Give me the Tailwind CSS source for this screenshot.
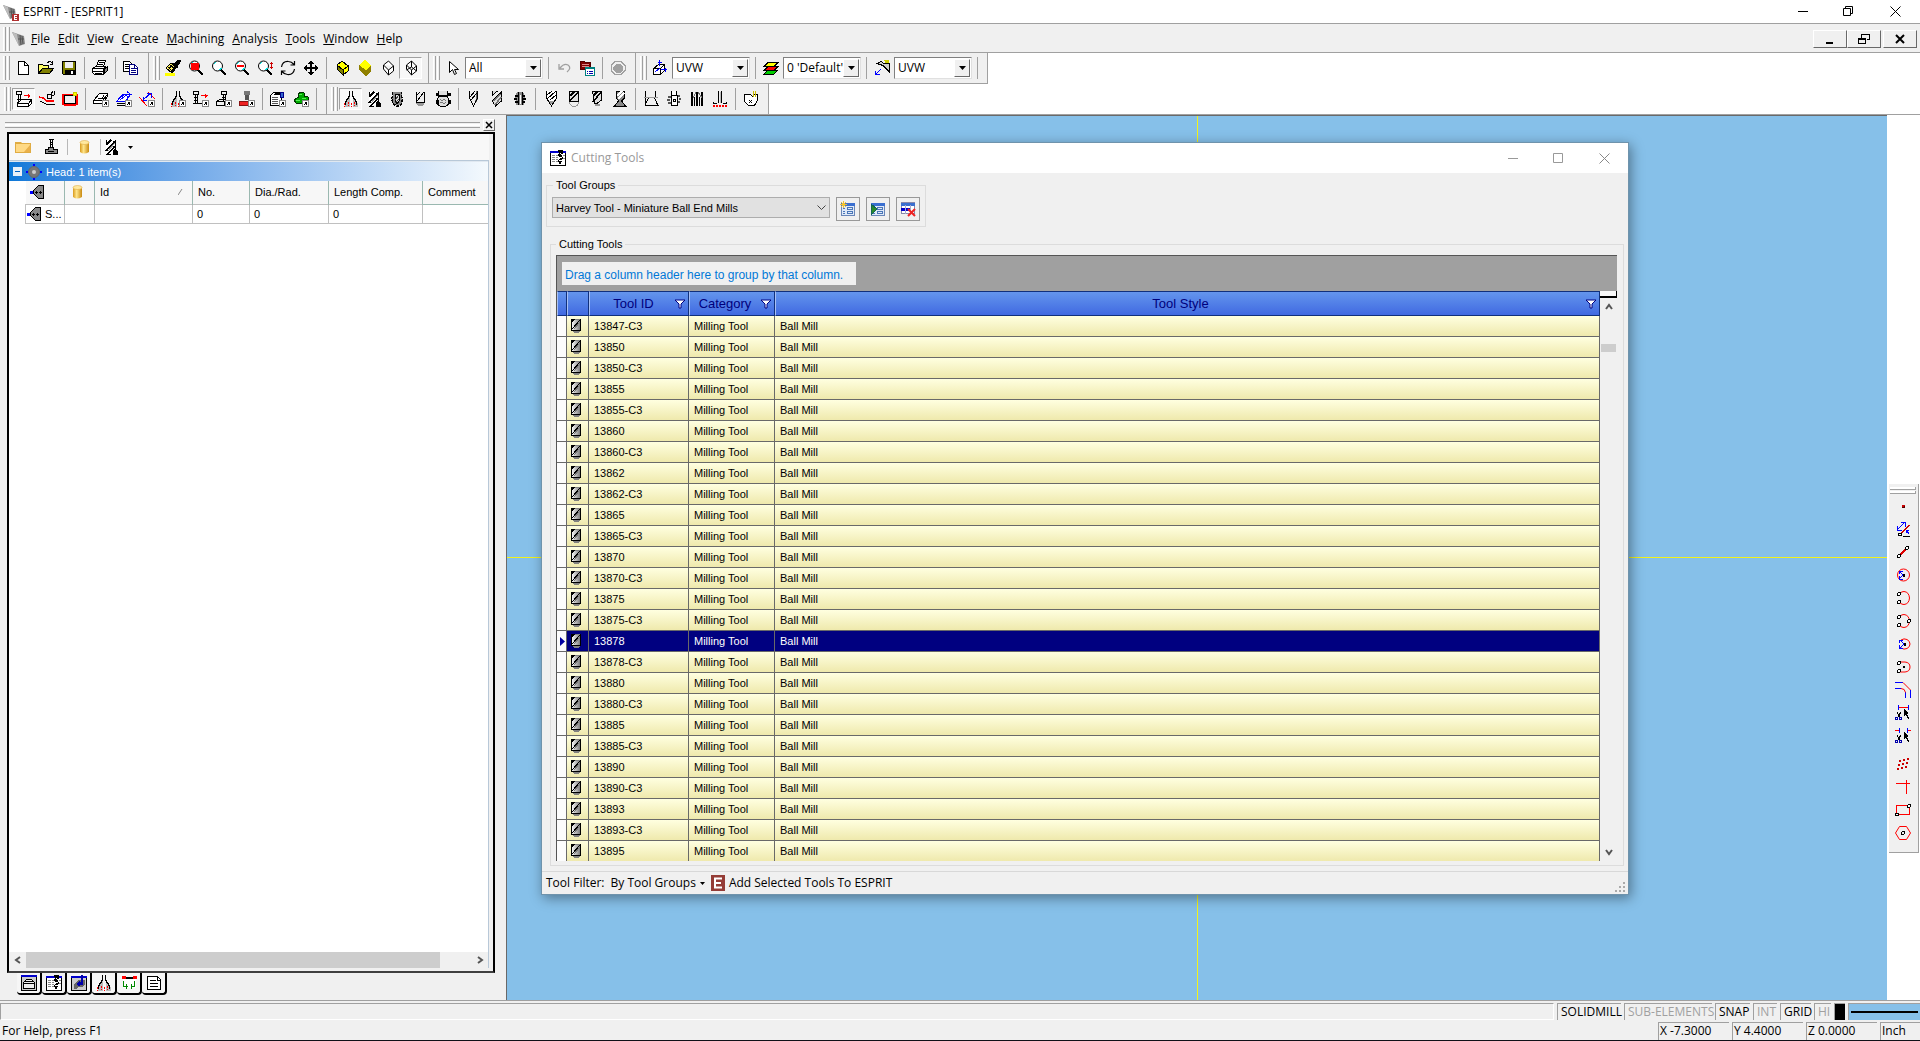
<!DOCTYPE html>
<html lang="en">
<head>
  <meta charset="UTF-8" />
  <meta name="viewport" content="width=device-width, initial-scale=1.0" />
  <title>ESPRIT - [ESPRIT1]</title>
  <script src="https://cdn.jsdelivr.net/npm/@tailwindcss/browser@4"></script>
</head>
<body class="h-screen overflow-hidden flex flex-col bg-[#f0f0f0] text-black text-[12px] leading-4 font-['Open_Sans',sans-serif]">

<!-- icon sprites -->
<svg class="absolute w-0 h-0" xmlns="http://www.w3.org/2000/svg">
  <defs>
    <linearGradient id="steel"><stop offset="0" stop-color="#fff"/><stop offset="1" stop-color="#777"/></linearGradient>
    <linearGradient id="gold"><stop offset="0" stop-color="#d99a1c"/><stop offset=".4" stop-color="#ffe58a"/><stop offset="1" stop-color="#c98a10"/></linearGradient>
    <g id="lens"><circle cx="6.500" cy="6" r="5" fill="#fff" shape-rendering="auto"/><path d="M3 4l2-2M8 10l3-2" stroke="#0dd"/><path d="M10 10l5 5" stroke-width="2.500"/></g>
    <g id="jump"><path d="M9.500 9.500h6v6h-6z" fill="#fff" stroke="#888"/><path d="M11 14l3-3M11.500 11.500h2v2"/></g>
    <g id="nodes"><circle cx="4" cy="4" r="1.500" fill="#fff"/><circle cx="4" cy="12" r="1.500" fill="#fff"/></g>
    <g id="snip"><path d="M2 7l3 5M6 7l-3 5"/><path d="M.5 12.500h2v2h-2zM4.500 12.500h2v2h-2z" stroke="#00a"/><path d="M9 4l5 4l-2 1l2 4l-1 1l-2-4l-2 1z" fill="#000" stroke="none"/></g>
  </defs>
  <symbol id="cone" viewBox="0 0 16 16"><path d="M1 1L13 5L14 13L8 15Z" fill="#8a8a8a" stroke="none"/><path d="M1 1L6 3L8 15Z" fill="#bdbdbd" stroke="none"/><path d="M9 4L10 14M11 5L12 13M7 8L13 8" stroke="#555"/></symbol>
  <symbol id="new" viewBox="0 0 16 16"><path d="M3.500 1.500h6l4 4v9h-10z" fill="#fff"/><path d="M9.500 1.500v4h4"/></symbol>
  <symbol id="open" viewBox="0 0 16 16"><path d="M.5 13.500v-9h4l1 1h5v3" fill="#ff6"/><path d="M.5 13.500l4-5h11l-4 5z" fill="#808000"/><path d="M9.500 2.500q3-2 5 1M14.500 1v3h-3"/></symbol>
  <symbol id="save" viewBox="0 0 16 16"><path d="M1.500 1.500h13v13h-12l-1-1z" fill="#808000"/><path d="M4 2h8v6h-8z" fill="#efefef" stroke="none"/><path d="M4 10h9v4h-9z" fill="#000"/><path d="M10 11h2v3h-2z" fill="#fff" stroke="none"/></symbol>
  <symbol id="print" viewBox="0 0 16 16"><path d="M4.500 6.500l2-6h7l-2 6M.5 8.500l3-2h9l2 1v4l-3 3h-9l-2-2z" fill="#fff"/><path d="M.5 8.500h11l3-2M11.500 9v5M.5 11.500h11M7 2.500h5M6 4.500h5M3 13h7"/><path d="M12 9l3-2v4l-3 3z" fill="#888"/></symbol>
  <symbol id="copy" viewBox="0 0 16 16"><path d="M.5 1.500h6l2 2v8h-8z" fill="#fff"/><path d="M2 4.500h4M2 6.500h5M2 8.500h5"/><path d="M6.500 4.500h5l3 3v7h-8z" fill="#fff" stroke="#000080"/><path d="M8 8.500h3M8 10.500h5M8 12.500h5M11.500 5v3h3" stroke="#000080"/></symbol>
  <symbol id="brush" viewBox="0 0 16 16"><path d="M0 13h10v2.500h-10z" fill="#ff0" stroke="none"/><path d="M1 8l5-5l5 5l-4 5z" fill="#ffef60"/><path d="M3 7l5 5M5 5l5 4M3 10l5-6M6 12l4-5"/><path d="M7 3l3 0l3-3l3 1l-3 4l-1 3z" fill="#000"/></symbol>
  <symbol id="zoomred" viewBox="0 0 16 16"><use href="#lens"/><path d="M3 3h7v6h-7z" fill="red" stroke="red"/></symbol>
  <symbol id="zoom" viewBox="0 0 16 16"><use href="#lens"/></symbol>
  <symbol id="zoomout" viewBox="0 0 16 16"><use href="#lens"/><path d="M3 6h7" stroke="red" stroke-width="2"/></symbol>
  <symbol id="zoomdyn" viewBox="0 0 16 16"><use href="#lens"/><path d="M14.500 2v7M13 3.500h3M13 7.500h3" stroke="#c00"/></symbol>
  <symbol id="rotate" viewBox="0 0 16 16"><path d="M1.500 7q1-6 7-5.500q3 0 5.500 3M14.500 9q-1 6-7 5.500q-3 0-5.500-3M14.500 1v4h-4M1.500 15v-4h4" shape-rendering="auto" stroke-width="1.200"/></symbol>
  <symbol id="pan" viewBox="0 0 16 16"><path d="M8 1v14M1 8h14" stroke-width="1.500"/><path d="M5 4l3-4l3 4zM5 12l3 4l3-4zM4 5l-4 3l4 3zM12 5l4 3l-4 3z" fill="#000" stroke="none"/></symbol>
  <symbol id="cubefull" viewBox="0 0 16 16"><path d="M3 5l5-4l6 5v5l-5 4l-6-6z" fill="#ff0"/><path d="M3 5l6 5v5l-6-6z" fill="#808000"/><path d="M9 10l5-4v5l-5 4z" fill="#ff0"/></symbol>
  <symbol id="cubeflat" viewBox="0 0 16 16"><path d="M2 5l6-5l6 5l-5 5z" fill="#ff0" stroke="none"/><path d="M2 5l7 5l5-5v6l-5 5l-7-6z" fill="#908000" stroke="none"/></symbol>
  <symbol id="cubehid" viewBox="0 0 16 16"><path d="M3.500 5l5-4l5 5v5l-5 4l-5-6zM3.500 5l5 5l5-4M8.500 10v5" fill="#fff" shape-rendering="auto"/></symbol>
  <symbol id="cubewire" viewBox="0 0 16 16"><path d="M3.500 5l5-4l5 5v5l-5 4l-5-6zM3.500 5l5 5l5-4M8.500 10v5M8.500 1v6l5 4M8.500 7l-5 3" fill="#fff" shape-rendering="auto"/></symbol>
  <symbol id="arrow" viewBox="0 0 16 16"><path d="M4.500 1.500v11l3-3l2 5l2-1l-2-4h4z" fill="#fff" shape-rendering="auto"/></symbol>
  <symbol id="undo" viewBox="0 0 16 16"><path d="M3 4v5h5M4 8q4-5 8-3q4 3-1 7" stroke="#a0a0a0" shape-rendering="auto" stroke-width="1.300"/></symbol>
  <symbol id="props" viewBox="0 0 16 16"><path d="M1.500 1.500h4l1 1h5v7h-10z" fill="#800000" stroke="#500"/><path d="M3 4.500h7M3 6.500h7" stroke="#d88"/><path d="M6.500 7.500h9v8h-9z" fill="#fff" stroke="#008080"/><path d="M7 8.500h8" stroke="#008080"/><path d="M8 11.500h1M10 11.500h4M8 13.500h1M10 13.500h4" stroke="#00a"/></symbol>
  <symbol id="stop" viewBox="0 0 16 16"><path d="M5 1.500h6l4 4v5l-4 4h-6l-4-4v-5z" stroke="#a0a0a0"/><path d="M6 4h4l3 3v3l-3 3h-4l-3-3v-3z" fill="#a0a0a0" stroke="none"/></symbol>
  <symbol id="plane" viewBox="0 0 16 16"><path d="M1.500 8.500l5-4h6l-4 4zM1.500 8.500v6h7l4-4v-6M8.500 8.500v6" fill="#fff"/><path d="M3 12l5-4M7.500 0v6M5.500 2.500h4M9 9.500h6M13.500 7.500v4" stroke="#00f"/></symbol>
  <symbol id="layers" viewBox="0 0 16 16"><path d="M1 14l4-4h10l-4 4z" fill="#0c0"/><path d="M1 10.500l4-4h10l-4 4z" fill="red"/><path d="M1 6.500l4-4h10l-4 4z" fill="#ff0"/></symbol>
  <symbol id="workplane" viewBox="0 0 16 16"><path d="M10 0h5v9z" fill="#cc0" stroke="none"/><path d="M3 3.500l4-2l3 2h5v8l-6-6z" fill="#ccc"/><path d="M1 15l6-6M1.500 11v3.500h4" stroke="#00f"/></symbol>

  <symbol id="mach" viewBox="0 0 16 16"><path d="M.5.500h5v3h-5zM2 4v7M4 4v7M1 8.500h4M1 11h4"/><path d="M1.500 12.500l4-4h10v4l-3 3h-11zM1.500 12.500h11l3-4M12.500 12v3" fill="#fff"/><path d="M8 4.500h6M12.500 2.500v4M13.500 3.500v2" stroke="red"/></symbol>
  <symbol id="path" viewBox="0 0 16 16"><path d="M0 6l4 1l4 3l7 0" stroke="red" stroke-width="1.500"/><path d="M1 10l6 3h9M8.500 3.500h4v4h-4zM12 3l2-3M13 5l2-1v-4"/></symbol>
  <symbol id="recttool" viewBox="0 0 16 16"><path d="M1 4.500q0-1 1-1h12q1 0 1 1v7q0 2-1 2h-12q-1 0-1-2z" stroke="red" stroke-width="2"/><path d="M2.500 4.500h11v8h-11z"/><path d="M11.500 1.500h3v3h-3z" fill="#ff0" stroke="#cc0"/></symbol>
  <symbol id="sheet" viewBox="0 0 16 16"><path d="M.5 9.500l6-7h8v3l-5 7h-9z" fill="#fff"/><path d="M.5 9.500h9l5-6M5 7.500h4l2-3M.5 12.500h9"/><use href="#jump"/></symbol>
  <symbol id="sheetblue" viewBox="0 0 16 16"><path d="M.5 10.500l6-7h8l-5 7z" fill="#fff" stroke="#00f"/><path d="M2 8l6-4M4 9l8-6M11 .5l4 3l-4 3" stroke="#00f"/><path d="M.5 12.500h8M.5 14.500h8"/><use href="#jump"/></symbol>
  <symbol id="dim" viewBox="0 0 16 16"><path d="M0 6l8 9M9 1l7 7" stroke="red"/><path d="M4 9l8-7M4 5.500v4h4M8 2.500h4v4" stroke="#00f"/><use href="#jump"/></symbol>
  <symbol id="lathe" viewBox="0 0 16 16"><path d="M6.500 0v5l-5 7v4h5v-11zM9.500 0v5l5 7v4h-5v-11z" fill="#bbb" stroke="none"/><path d="M6.500 0v5l-4 6v3M9.500 0v5l4 6v3" stroke-width="1.200"/><path d="M1.500 12v4M5.500 11v4M8.500 12v4M11.500 11v4" stroke="red" stroke-dasharray="2 1"/></symbol>
  <symbol id="lathej" viewBox="0 0 16 16"><use href="#lathe" width="16" height="16"/><use href="#jump"/></symbol>
  <symbol id="machj" viewBox="0 0 16 16"><path d="M.5.500h5v3h-5zM2 4v8M4 4v8M1 6.500h4M1 9.500h4M0 12.500h9"/><path d="M8 4.500h7M12.500 2.500v4M13.500 3.500v2" stroke="red"/><use href="#jump"/></symbol>
  <symbol id="blockj" viewBox="0 0 16 16"><path d="M5.500.500h5v3h-5zM7 4v6M9 4v6M6 6.500h4M6 8.500h4"/><path d="M.5 10.500h8v4h-8zM.5 10.500l3-2h4"/><use href="#jump"/></symbol>
  <symbol id="blockred" viewBox="0 0 16 16"><path d="M5 0h6v4h-6z" fill="#777" stroke="none"/><path d="M6 4h4v5h-4z" fill="#555" stroke="none"/><path d="M.5 10.500h10v4h-10z" fill="#e22" stroke="#811"/><use href="#jump"/></symbol>
  <symbol id="doc" viewBox="0 0 16 16"><path d="M.5 14.500v-10l3-3h8v9l-3 4z" fill="#fff"/><path d="M2 6.500h6M2 8.500h6M2 10.500h6M2 12.500h6" stroke="#555"/><path d="M4 4l3-2M6 4l3-2M8 4l3-2"/><path d="M10.500 1.500h3v5h-3z" fill="#36c" stroke="#008"/><use href="#jump"/></symbol>
  <symbol id="green" viewBox="0 0 16 16"><path d="M5 3l3-2l3 1v3l4 1v3l-4 1l-3 3l-5-1l-2-3l3-2l2-1z" fill="#0a0" stroke="#030"/><path d="M6 3l3 1M3 9l4 1M9 7h4" stroke="#5e5"/><use href="#jump"/></symbol>

  <symbol id="endmill" viewBox="0 0 16 16"><path d="M3 1v13h7l2-13z" fill="#fff" stroke="none"/><path d="M3 6l5-5M3 12l9-10M5 15l7-8" stroke-width="1.600"/><path d="M5 12l7-8" stroke="#999"/><path d="M3.500 1v4M12.500 1v9M3 15.500h5"/><path d="M10 12l2-2l2 2v3h-4z" fill="#000"/></symbol>
  <symbol id="bull" viewBox="0 0 16 16"><path d="M3.500 1v4l-1 3l2 5l3 2h2l3-2l1-5l-1-3v-4" fill="#888" stroke-dasharray="3 1" stroke-width="1.500"/><path d="M6 3h4v7l-2 3l-2-3z" fill="#ddd"/><path d="M6 9l4-5M6 12l4-4" stroke="#444"/></symbol>
  <symbol id="ball" viewBox="0 0 16 16"><path d="M4 1h9v10q-1 4-4.500 4q-4 0-4.500-4z" fill="#999" stroke="none"/><path d="M4.500 1v10h8v-10" fill="#eee"/><path d="M4 5l4-4M5 10l7-9"/></symbol>
  <symbol id="facemill" viewBox="0 0 16 16"><path d="M3.500 0v4h9v-4M4 5l-2 4v4l3 2h6l3-2v-4l-2-4z" fill="#ddd"/><path d="M1 2h2v2h-2zM13 2h2v2h-2zM1 9h2v3h-2zM13 9h2v3h-2z" fill="#000"/><path d="M5 8l2 2l2-2l2 2M5 12l2-1l2 2l2-2" stroke="#777"/></symbol>
  <symbol id="drill" viewBox="0 0 16 16"><path d="M3.500 0v8l4 7l4-7v-8" fill="#eee" stroke="none"/><path d="M8 15l4-7v-8h-2v7z" fill="#666" stroke="none"/><path d="M3.500 0v7l4 8l4-8v-7M4 6l5-6M5 9l6-7"/></symbol>
  <symbol id="reamer" viewBox="0 0 16 16"><path d="M3.500 0v4l5-4M3.500 10l9-9v9l-6 5l-2-3z" fill="#ddd"/><path d="M5 10l6-7M6 14l6-8" stroke="#777" stroke-width="1.500"/></symbol>
  <symbol id="tap" viewBox="0 0 16 16"><path d="M5 1l-2 4v3l1 2v4h8v-4l1-2v-3l-2-4z" fill="#888" stroke="none"/><path d="M6 1v13M10 1v13"/><path d="M3 5h3M2 8h3M3 11h3M10 5h3M11 8h3M10 11h3" stroke-width="1.500"/><path d="M8 4v9" stroke="#fff"/></symbol>
  <symbol id="center" viewBox="0 0 16 16"><path d="M3.500 0v7l5 8l5-8v-7" fill="#fff"/><path d="M4 4l5-4M4 8l9-8M7 9l6-5"/><path d="M6 10h5l-3 4z" fill="#999" stroke="none"/></symbol>
  <symbol id="bore" viewBox="0 0 16 16"><path d="M3.500 0h9v10h-9z" fill="#ddd"/><path d="M4 5l5-5M4 10l8-9" stroke-width="1.500"/><path d="M3.500 11q1 4.500 4.500 4.500q4 0 4.500-4.500" stroke="#999"/></symbol>
  <symbol id="cbore" viewBox="0 0 16 16"><path d="M3.500 0h9v9l-4 3h-3z" fill="#ddd"/><path d="M4 5l5-5M4 11l8-10" stroke-width="1.500"/><path d="M6 13h5v2h-5z" fill="#999" stroke="none"/></symbol>
  <symbol id="dove" viewBox="0 0 16 16"><path d="M4.500 0h8v7l-3 3l4 5h-11l4-5l-2-3z" fill="#888"/><path d="M5 5l5-5M6 8l6-6" stroke="#fff" stroke-width="1.500"/></symbol>
  <symbol id="round" viewBox="0 0 16 16"><path d="M2.500 0v14.500h13M12.500 0v6M2.500 14q2-8 6-8q4 0 6 8"/><path d="M1 6.500h14" stroke="#999"/></symbol>
  <symbol id="slot" viewBox="0 0 16 16"><path d="M5.500 0v4h5v-4M5.500 4.500h6v10h-6z" fill="#fff"/><path d="M2 5.500h3M1 8.500h3M2 11.500h3M12 4.500h2M13 7.500h2M12 10.500h2" stroke-width="2" stroke="#555"/><path d="M7.500 8.500h2v2h-2z"/></symbol>
  <symbol id="thread" viewBox="0 0 16 16"><path d="M3 1v14M5.500 6v9M8 1v14M10.500 6v9M13 1v14" stroke-width="1.500"/><path d="M4 7l3-6M9 1l4 6" stroke="#777"/></symbol>
  <symbol id="probe" viewBox="0 0 16 16"><path d="M6.500 0v12M9.500 0v12"/><path d="M8 1v11" stroke="#bbb"/><path d="M1.500 11v2M14.500 11v2M1 12.500h4M11 12.500h4"/><path d="M1 14.500h15" stroke="red" stroke-width="2" stroke-dasharray="2 1"/></symbol>
  <symbol id="custom" viewBox="0 0 16 16"><path d="M1.500 3.500h6l2 2l2-2h3v6l-3 5h-6l-4-4z" fill="#fff"/><path d="M6 9l3 3M9 9l-3 3"/><path d="M11 0l-1 6M13 0l-1 6" stroke="#cb0"/></symbol>

  <symbol id="folder" viewBox="0 0 16 16"><path d="M0 3h6l1 1h9v10h-16z" fill="#e0ac43" stroke="none"/><path d="M1 5h14v8h-14z" fill="#ffd984" stroke="none"/><path d="M9 13l6-7v7z" fill="#eab04a" stroke="none"/></symbol>
  <symbol id="holder" viewBox="0 0 16 16"><path d="M2.500 10.500h3v-2h5v2h4v4h-12z" fill="#888" stroke-width="1.300"/><path d="M6 .5h5M7.500 1v8M9.500 1v8M7 3.500h3M7 5.500h3M5 12.500h6"/></symbol>
  <symbol id="db" viewBox="0 0 16 16"><path d="M4 3v10q4 3 9 0v-10z" fill="url(#gold)" stroke="none"/><ellipse cx="8.500" cy="3.500" rx="4.500" ry="2" fill="#ffe9a0" stroke="#d9a030" stroke-width=".5" shape-rendering="auto"/></symbol>
  <symbol id="head" viewBox="0 0 16 16"><circle cx="8" cy="8" r="5.500" fill="#777" stroke="#666" shape-rendering="auto"/><circle cx="8" cy="8" r="2" fill="#ccc" stroke="none"/><path d="M7 0h2v2h-2zM7 14h2v2h-2zM0 7h2v2h-2zM14 7h2v2h-2z" fill="#00f" stroke="none"/></symbol>
  <symbol id="spindle" viewBox="0 0 16 16"><path d="M14.500 1.500h-5l-5 5v3l5 5h5z" fill="#888"/><path d="M6 8.500h3M7.500 7v3M10 8.500h3M11.500 7v3"/><path d="M1 7h3v3h-3z" fill="#00f" stroke="none"/></symbol>
  <symbol id="tab1" viewBox="0 0 16 16"><path d="M.5.500h15v15h-15z" fill="#ccc"/><path d="M0 1h16" stroke="#00c" stroke-width="2"/><path d="M2.500 7.500l3-3h5l3 3v6h-11z" fill="#eee"/><path d="M3 8.500h11M4 6.500h8M3 13.500h10"/></symbol>
  <symbol id="tab2" viewBox="0 0 16 16"><path d="M.5 1.500h15v14h-15z" fill="#fff"/><path d="M0 2h16" stroke="#00c" stroke-width="2"/><path d="M2 5.500h6M2 7.500h6M2 9.500h6M2 11.500h6M13 5.500h2M13 8.500h2" stroke="#888" stroke-dasharray="3 1"/><path d="M8 0h5v3l-1 2l1 3l-1 3l-2 4l-2-4l2-3l-2-3l1-2z" fill="#000" stroke="none"/><path d="M10.500 3l1 2M9.500 7l2 1M9.500 11l2-1" stroke="#fff"/></symbol>
  <symbol id="tab3" viewBox="0 0 16 16"><path d="M.5 1.500h15v14h-15z" fill="#ccc"/><path d="M0 2h16" stroke="#00c" stroke-width="2"/><path d="M3 9l4-4h7v4l-3 3h-4l-2 2h-2z" fill="#666" stroke="none"/><path d="M11 0v9h-3M9 7l-2 2l2 2" stroke="#00a" stroke-width="1.500"/></symbol>
  <symbol id="tab5" viewBox="0 0 16 16"><path d="M2 2h13v11h-13z" fill="#fff" stroke="none"/><path d="M2 3h13" stroke-width="2"/><path d="M1 1h4v3h-4zM12 1h4v3h-4z" fill="red" stroke="none"/><path d="M2.500 6v5.500h4M5.500 9v5M13.500 6v5.500h-3M10.500 9v5" stroke="#080"/></symbol>
  <symbol id="tab6" viewBox="0 0 16 16"><path d="M1.500 1.500h10l3 3v10h-13z" fill="#fff" stroke-width="1.300"/><path d="M11 1v4h4M4 5.500h6M4 8.500h8M4 11.500h8"/></symbol>
  <symbol id="ballmill" viewBox="0 0 12 16"><path d="M1 1h10v10l-2 4h-5l-3-3z" fill="#808080" stroke="none"/><path d="M1.500 1.500h9v11h-9z" fill="url(#steel)" stroke="none"/><path d="M1 1h4l-4 4z" fill="#000" stroke="none"/><path d="M1.500 1v11h8M2 11l8-9"/><path d="M4 11l6-7" stroke="#777"/><path d="M10.500 1v12"/></symbol>
  <symbol id="fsheet" viewBox="0 0 16 16"><path d="M1.500 2.500h13v12h-13z" fill="#dfe9f8" stroke="#6a86b8"/><path d="M1 3.500h14" stroke="#3a6fd0" stroke-width="3"/><path d="M3 7.500h2M3 10.500h2M3 12.500h2M7.500 6.500h5v2h-5zM7.500 10.500h5v2h-5z" stroke="#4a76b8"/></symbol>
  <symbol id="addgrp" viewBox="0 0 16 16"><use href="#fsheet" width="16" height="16"/><path d="M0 3.500h7M3.500 0v7M1 1l5 5M6 1l-5 5" stroke="#f4c430"/></symbol>
  <symbol id="selgrp" viewBox="0 0 16 16"><use href="#fsheet" width="16" height="16"/><path d="M1 3l6 5l-6 6z" fill="#2a8a2a" stroke="#165"/></symbol>
  <symbol id="delgrp" viewBox="0 0 16 16"><path d="M1.500 1.500h13v11h-13z" fill="#fff" stroke="#88a"/><path d="M1 3h14" stroke="#3a6fd0" stroke-width="3"/><path d="M1 8h10" stroke="#00c" stroke-width="3"/><path d="M5.500 4v9M10.500 4v6" stroke="#aac"/><path d="M8 8l7 7M15 8l-7 7" stroke="#e22" stroke-width="2" shape-rendering="auto"/></symbol>
  <symbol id="funnel" viewBox="0 0 12 10"><path d="M1 1h10l-4 4v4h-2v-4z" fill="#fff" stroke="#000080" shape-rendering="auto"/></symbol>

  <symbol id="r1" viewBox="0 0 16 16"><path d="M7 7h3v3h-3z" fill="#c00" stroke="none"/><path d="M7 9.500h2.500v-2" stroke="#500"/></symbol>
  <symbol id="r2" viewBox="0 0 16 16"><path d="M2 9l8-8M2.500 5v4h4M6 1.500h4v4M11 9l3 4M11 12v-3h3" stroke="#00f"/><path d="M6 13l8-9" stroke="#c00" stroke-width="1.500"/><path d="M8 15.500h7"/><circle cx="5" cy="13.500" r="1.500" fill="#fff"/></symbol>
  <symbol id="r3" viewBox="0 0 16 16"><path d="M4 12l8-8" stroke="#d00" stroke-width="1.500"/><circle cx="4" cy="12" r="1.500" fill="#fff"/><circle cx="12" cy="4" r="1.500" fill="#fff"/></symbol>
  <symbol id="r4" viewBox="0 0 16 16"><circle cx="8.500" cy="8" r="6" stroke="red" shape-rendering="auto"/><path d="M8 8l-4-4M8 8l-4 4M4.500 7v-3h3M4.500 9v3h3" stroke="#00f"/><path d="M8 7h1v2h-1z"/></symbol>
  <symbol id="r5" viewBox="0 0 16 16"><path d="M5 3q2-1.500 4-1.500q5 .5 5.500 6.500q-.5 6-5.500 6.500q-2 0-4-1.500" stroke="red" shape-rendering="auto"/><use href="#nodes"/></symbol>
  <symbol id="r6" viewBox="0 0 16 16"><use href="#r5" width="16" height="16"/><circle cx="14" cy="8" r="1.500" fill="#fff"/></symbol>
  <symbol id="r7" viewBox="0 0 16 16"><path d="M6 4q3-2 6-.5q3 1.500 3 4.500t-3 4.500q-3 1.500-6-.5" stroke="red" shape-rendering="auto"/><path d="M9 8l-4-4M9 8l-4 4M4.500 7v-3h3M4.500 9v3h3" stroke="#00f"/><path d="M9 7h1v2h-1z"/></symbol>
  <symbol id="r8" viewBox="0 0 16 16"><path d="M4 3h6q5 .5 5 5t-5 5h-6" stroke="red" shape-rendering="auto"/><use href="#nodes"/><path d="M8 7.500h1v1h-1z"/></symbol>
  <symbol id="r9" viewBox="0 0 16 16"><path d="M0 .5h8M0 6.500h6M10.500 10v6M15.500 8v8" stroke="#00f"/><path d="M8 .5l7.500 7.500M6 6.500q4 0 4.500 4" stroke="red" shape-rendering="auto"/></symbol>
  <symbol id="r10" viewBox="0 0 16 16"><path d="M3.500 0v5M13.500 0v5" stroke="#00f"/><path d="M4 2.500h9" stroke="red"/><use href="#snip"/></symbol>
  <symbol id="r11" viewBox="0 0 16 16"><path d="M4.500 0v5M12.500 0v5" stroke="#00f"/><path d="M0 2.500h4M13 2.500h3" stroke="red"/><use href="#snip"/></symbol>
  <symbol id="r12" viewBox="0 0 16 16"><g fill="#c00" stroke="none"><path d="M4 4h2v2h-2zM8 3h2v2h-2zM12 2h2v2h-2zM3 8h2v2h-2zM7 7h2v2h-2zM11 6h2v2h-2zM2 12h2v2h-2zM6 11h2v2h-2zM10 10h2v2h-2z"/></g></symbol>
  <symbol id="r13" viewBox="0 0 16 16"><path d="M1 4.500h14M11.500 1v14" stroke="red"/></symbol>
  <symbol id="r14" viewBox="0 0 16 16"><path d="M1.500 3.500h13v9h-13z" stroke="red"/><circle cx="2" cy="12.500" r="1.500" fill="#fff"/><circle cx="14" cy="4" r="1.500" fill="#fff"/></symbol>
  <symbol id="r15" viewBox="0 0 16 16"><path d="M4.500 1.500h7l4 6.500l-4 6.500h-7l-4-6.500z" stroke="red" shape-rendering="auto"/><circle cx="8" cy="8" r="1.500"/></symbol>
</svg>

<!-- title bar -->
<header class="h-[23px] shrink-0 bg-white flex items-center pl-[2px]">
  <div class="relative w-4 h-4 mr-[5px]">
    <svg class="w-4 h-4 fill-none stroke-black"><use href="#cone"/></svg>
    <svg class="absolute -right-px -bottom-px w-[7px] h-[7px]" viewBox="0 0 7 7"><path d="M0 0h7v7h-7z" fill="#b03030"/><path d="M2 1.500h3M2 3.500h3M2 5.500h3M2.500 1v5" stroke="#fff"/></svg>
  </div>
  <h1 class="grow">ESPRIT - [ESPRIT1]</h1>
  <button class="w-[45px] h-5 flex justify-center items-center" aria-label="Minimize"><svg class="w-[11px] h-[11px]" viewBox="0 0 11 11"><path d="M0 5.500h10" stroke="#000"/></svg></button>
  <button class="w-[45px] h-5 flex justify-center items-center" aria-label="Restore"><svg class="w-[11px] h-[11px]" viewBox="0 0 11 11"><path d="M.5 2.500h7v7h-7zM2.500 2.500v-2h7v7h-2" fill="none" stroke="#000"/></svg></button>
  <button class="w-[49px] h-5 flex justify-center items-center" aria-label="Close"><svg class="w-[11px] h-[11px]" viewBox="0 0 11 11"><path d="M.5.500l10 10M10.500.500l-10 10" stroke="#000"/></svg></button>
</header>

<!-- menu bar -->
<nav class="h-[30px] shrink-0 border-y border-[#a0a0a0] flex items-center pl-[3px] pr-[3px] pt-[2px]">
  <span class="w-[3px] h-6 border-l border-white border-r border-r-[#a0a0a0]"></span><span class="w-[3px] h-6 ml-px border-l border-white border-r border-r-[#a0a0a0]"></span>
  <svg class="w-4 h-4 ml-[1px] mr-[4px] fill-none stroke-black"><use href="#cone"/></svg>
  <ul class="flex gap-[8px] grow">
    <li><a href="#"><u>F</u>ile</a></li>
    <li><a href="#"><u>E</u>dit</a></li>
    <li><a href="#"><u>V</u>iew</a></li>
    <li><a href="#"><u>C</u>reate</a></li>
    <li><a href="#"><u>M</u>achining</a></li>
    <li><a href="#"><u>A</u>nalysis</a></li>
    <li><a href="#"><u>T</u>ools</a></li>
    <li><a href="#"><u>W</u>indow</a></li>
    <li><a href="#"><u>H</u>elp</a></li>
  </ul>
  <button class="w-[34px] h-[18px] border border-white border-r-[#696969] border-b-[#696969] flex justify-center items-center" aria-label="Minimize document"><svg class="w-3 h-3" viewBox="0 0 12 12"><path d="M2 10h7" stroke="#000" stroke-width="2"/></svg></button>
  <button class="w-[34px] h-[18px] border border-white border-r-[#696969] border-b-[#696969] flex justify-center items-center" aria-label="Restore document"><svg class="w-3 h-3" viewBox="0 0 12 12"><path d="M.5 5.500h7v5h-7zM3.500 5v-4h8v5h-3M.5 6.500h7M3.500 1.500h8" fill="none" stroke="#000" shape-rendering="crispEdges"/></svg></button>
  <button class="w-[34px] h-[18px] ml-[2px] border border-white border-r-[#696969] border-b-[#696969] flex justify-center items-center" aria-label="Close document"><svg class="w-3 h-3" viewBox="0 0 12 12"><path d="M2 2l8 8M10 2l-8 8" stroke="#000" stroke-width="2"/></svg></button>
</nav>

<!-- toolbars, filled by the script below -->
<div class="bg-white shrink-0">
  <div class="flex h-[31px]">
    <div class="flex items-center bg-[#f0f0f0] border-r border-b border-[#a0a0a0] pl-[3px] pr-[6px]" data-bar="new open save | print | copy"></div>
    <div class="flex items-center bg-[#f0f0f0] border-r border-b border-[#a0a0a0] pl-[4px] pr-[6px]" data-bar="brush zoomred zoom zoomout zoomdyn rotate pan | cubefull cubeflat cubehid cubewire*"></div>
    <div class="flex items-center bg-[#f0f0f0] border-r border-b border-[#a0a0a0] pl-[4px] pr-[6px]" data-bar="arrow =All | undo props | stop"></div>
    <div class="flex items-center bg-[#f0f0f0] border-r border-b border-[#a0a0a0] pl-[4px] pr-[6px]" data-bar="plane =UVW | layers =0_'Default' | workplane =UVW |"></div>
  </div>
  <div class="flex h-[31px] border-b border-[#a0a0a0]">
    <div class="flex items-center bg-[#f0f0f0] border-r border-[#a0a0a0] pl-[4px] pr-[6px]" data-bar="mach* path recttool | sheet sheetblue dim | lathej machj blockj blockred | doc green |"></div>
    <div class="flex items-center bg-[#f0f0f0] border-r border-[#a0a0a0] pl-[4px] pr-[6px]" data-bar="lathe* endmill bull ball facemill | drill reamer tap | center bore cbore dove | round slot thread probe | custom"></div>
  </div>
</div>

<div class="flex grow min-h-0">
  <!-- tool manager panel -->
  <aside class="w-[500px] shrink-0 flex flex-col pl-[5px] pr-[5px] pt-[3px]">
    <div class="flex items-center h-[14px] gap-[3px]">
      <div class="grow h-[6px] border-y border-[#a0a0a0] flex items-center"><span class="w-full h-[2px] bg-white"></span></div>
      <button class="w-[12px] h-[12px] border border-white border-r-[#696969] border-b-[#696969] flex items-center justify-center" aria-label="Close panel"><svg class="w-2 h-2" viewBox="0 0 8 8"><path d="M1 1l6 6M7 1l-6 6" stroke="#000" stroke-width="1.500"/></svg></button>
    </div>
    <div class="grow min-h-0 ml-[2px] border-2 border-black border-b-[#404040] flex flex-col bg-[#f0f0f0] pr-[4px] pb-[3px]">
      <div class="h-[27px] shrink-0 bg-[#f8f8f8] flex items-center border-b border-[#b8c8d8]">
        <button class="w-7 flex justify-center" aria-label="New folder"><svg class="w-4 h-4 fill-none stroke-black"><use href="#folder"/></svg></button>
        <button class="w-7 flex justify-center" aria-label="Tool holder"><svg class="w-4 h-4 fill-none stroke-black [shape-rendering:crispEdges]"><use href="#holder"/></svg></button>
        <span class="w-px h-4 bg-[#b8b8b8] mx-[2px]"></span>
        <button class="w-7 flex justify-center" aria-label="Tool database"><svg class="w-4 h-4 fill-none stroke-black"><use href="#db"/></svg></button>
        <span class="w-px h-4 bg-[#b8b8b8] mx-[2px]"></span>
        <button class="flex items-center gap-[9px]" aria-label="Milling tool"><svg class="w-4 h-4 fill-none stroke-black [shape-rendering:crispEdges]"><use href="#endmill"/></svg><svg class="w-[5px] h-[3px]" viewBox="0 0 5 3"><path d="M0 0h5l-2.500 3z"/></svg></button>
      </div>
      <div class="grow min-h-0 bg-white border-r border-[#b8c8d8] flex flex-col font-['Liberation_Sans',sans-serif] text-[11px]">
        <div class="h-5 shrink-0 flex items-center text-white bg-linear-to-r from-[#0b78d8] to-[#f4f9fd] border-t border-[#e0e8f0] text-[12px]">
          <button class="w-[9px] h-[9px] ml-[4px] bg-[#e8f0f8] flex items-center justify-center" aria-label="Collapse"><span class="w-[5px] h-px bg-[#0060c0]"></span></button>
          <svg class="w-4 h-4 ml-[4px] mr-[4px] fill-none stroke-black"><use href="#head"/></svg><span class="text-[11px]">Head: 1 item(s)</span>
        </div>
        <table class="table-fixed border-collapse ml-4 w-[463px] text-left">
          <colgroup><col class="w-[39px]" /><col class="w-[30px]" /><col class="w-[98px]" /><col class="w-[57px]" /><col class="w-[79px]" /><col class="w-[94px]" /><col /></colgroup>
          <thead>
            <tr class="h-[23px] bg-[#f7f7f7] border-b border-[#9ab8b0]">
              <th class="border-r border-[#9ab8b0] font-normal pl-[3px]"><svg class="w-4 h-4 fill-none stroke-black [shape-rendering:crispEdges]"><use href="#spindle"/></svg></th>
              <th class="border-r border-[#9ab8b0] font-normal pl-[4px]"><svg class="w-4 h-4 fill-none stroke-black"><use href="#db"/></svg></th>
              <th class="border-r border-[#9ab8b0] font-normal pl-[5px]"><div class="flex justify-between items-center pr-[8px]">Id<svg class="w-[6px] h-[6px]" viewBox="0 0 6 6"><path d="M0 6l4-6" stroke="#888"/></svg></div></th>
              <th class="border-r border-[#9ab8b0] font-normal pl-[5px]">No.</th>
              <th class="border-r border-[#9ab8b0] font-normal pl-[5px]">Dia./Rad.</th>
              <th class="border-r border-[#9ab8b0] font-normal pl-[5px]">Length Comp.</th>
              <th class="font-normal pl-[5px]">Comment</th>
            </tr>
          </thead>
          <tbody>
            <tr class="h-[19px]">
              <td class="border border-[#c0c0c0]"><div class="flex items-center gap-[3px]"><svg class="w-4 h-4 shrink-0 fill-none stroke-black [shape-rendering:crispEdges]"><use href="#spindle"/></svg>S...</div></td>
              <td class="border border-[#c0c0c0]"></td>
              <td class="border border-[#c0c0c0]"></td>
              <td class="border border-[#c0c0c0] pl-1">0</td>
              <td class="border border-[#c0c0c0] pl-1">0</td>
              <td class="border border-[#c0c0c0] pl-1">0</td>
              <td class="border-b border-[#c0c0c0]"></td>
            </tr>
          </tbody>
        </table>
        <div class="mt-auto h-4 bg-[#f0f0f0] flex items-center">
          <button class="w-[17px] flex justify-center" aria-label="Scroll left"><svg class="w-2 h-2" viewBox="0 0 8 8"><path d="M6 1l-4 3l4 3" fill="none" stroke="#555" stroke-width="2"/></svg></button>
          <div class="grow h-4"><div class="w-[93%] h-4 bg-[#cdcdcd]"></div></div>
          <button class="w-[17px] flex justify-center" aria-label="Scroll right"><svg class="w-2 h-2" viewBox="0 0 8 8"><path d="M2 1l4 3l-4 3" fill="none" stroke="#555" stroke-width="2"/></svg></button>
        </div>
      </div>
    </div>
    <div class="flex h-[27px] shrink-0 pl-[12px] pb-[4px]" id="tabs"></div>
  </aside>

  <!-- drawing area -->
  <main class="relative grow min-w-0 ml-[6px] border-l border-t border-[#696969] bg-[#86c0e9]">
    <div class="absolute top-0 bottom-0 left-1/2 w-px bg-[#f2f21c]"></div>
    <div class="absolute left-0 right-0 top-1/2 h-px -mt-px bg-[#f2f21c]"></div>

    <section class="absolute top-[26px] left-[34px] right-[258px] h-[753px] bg-[#f0f0f0] border border-[#6f93ac] shadow-[2px_3px_12px_rgba(0,0,0,0.4)] flex flex-col">
      <div class="h-[30px] shrink-0 bg-white flex items-center pl-[8px] text-[#999]">
        <svg class="w-4 h-4 mr-[5px] fill-none stroke-black [shape-rendering:crispEdges]"><use href="#tab2"/></svg>
        <h2 class="grow">Cutting Tools</h2>
        <button class="w-[45px] flex justify-center" aria-label="Minimize dialog"><svg class="w-[11px] h-[11px]" viewBox="0 0 11 11"><path d="M0 5.500h10" stroke="#999"/></svg></button>
        <button class="w-[45px] flex justify-center" aria-label="Maximize dialog"><svg class="w-[11px] h-[11px]" viewBox="0 0 11 11"><path d="M.5.500h9v9h-9z" fill="none" stroke="#999"/></svg></button>
        <button class="w-[47px] flex justify-center" aria-label="Close dialog"><svg class="w-[11px] h-[11px]" viewBox="0 0 11 11"><path d="M.5.500l10 10M10.500.500l-10 10" stroke="#888"/></svg></button>
      </div>

      <div class="grow min-h-0 flex flex-col pt-[4px] font-['Liberation_Sans',sans-serif] text-[11px]">
        <fieldset class="w-[380px] h-[50px] ml-[4px] border border-[#dcdcdc] pl-[5px]">
          <legend class="ml-px px-[3px] leading-4"><label for="group">Tool Groups</label></legend>
          <div class="flex gap-[6px] mt-[4px]">
            <div class="relative w-[278px]">
              <select id="group" class="appearance-none w-full h-[21px] bg-[#e1e1e1] border border-[#adadad] pl-[3px] leading-4"><option>Harvey Tool - Miniature Ball End Mills</option></select>
              <svg class="absolute right-[4px] top-[8px] w-[9px] h-[6px] pointer-events-none" viewBox="0 0 9 6"><path d="M.5.500l4 4l4-4" fill="none" stroke="#444"/></svg>
            </div>
            <button class="w-6 h-6 border border-[#999] flex items-center justify-center" aria-label="New group"><svg class="w-4 h-4 fill-none stroke-black [shape-rendering:crispEdges]"><use href="#addgrp"/></svg></button>
            <button class="w-6 h-6 border border-[#999] flex items-center justify-center" aria-label="Edit group"><svg class="w-4 h-4 fill-none stroke-black [shape-rendering:crispEdges]"><use href="#selgrp"/></svg></button>
            <button class="w-6 h-6 border border-[#999] flex items-center justify-center" aria-label="Delete group"><svg class="w-4 h-4 fill-none stroke-black [shape-rendering:crispEdges]"><use href="#delgrp"/></svg></button>
          </div>
        </fieldset>

        <fieldset class="grow min-h-0 mt-[9px] ml-[8px] mr-[4px] mb-[5px] border border-[#dcdcdc] pl-[5px] pr-[5px] pb-[4px]">
          <legend class="px-[3px] leading-4">Cutting Tools</legend>
          <div class="h-[606px] flex flex-col mt-[3px] mr-px border-t border-l border-[#555]">
            <div class="h-[35px] shrink-0 bg-[#a0a0a0] flex items-center pl-[5px]">
              <span class="bg-[#f0f0f0] text-[#0078d7] text-[12px] leading-4 w-[294px] h-[23px] pt-[5px] pl-[3px] whitespace-nowrap">Drag a column header here to group by that column.</span>
            </div>
            <div class="grow min-h-0 flex">
              <div class="grow min-w-0 overflow-hidden">
                <table class="table-fixed w-full border-separate border-spacing-0">
                  <colgroup><col class="w-[10px]" /><col class="w-[22px]" /><col class="w-[100px]" /><col class="w-[86px]" /><col /></colgroup>
                  <thead>
                    <tr class="h-[25px] text-[13px] text-[#00007c]">
                      <th class="bg-linear-to-b from-[#6495ed] to-[#4169e1] border border-l-[#a8c0f4] border-t-[#10307c] border-r-[#10307c] border-b-[#10307c]"></th>
                      <th class="bg-linear-to-b from-[#6495ed] to-[#4169e1] border border-l-[#a8c0f4] border-t-[#10307c] border-r-[#10307c] border-b-[#10307c]"></th>
                      <th class="bg-linear-to-b from-[#6495ed] to-[#4169e1] border border-l-[#a8c0f4] border-t-[#10307c] border-r-[#10307c] border-b-[#10307c] font-normal"><div class="flex items-center pr-[2px]"><span class="grow pl-[3px]">Tool ID</span><svg class="w-3 h-[10px]"><use href="#funnel"/></svg></div></th>
                      <th class="bg-linear-to-b from-[#6495ed] to-[#4169e1] border border-l-[#a8c0f4] border-t-[#10307c] border-r-[#10307c] border-b-[#10307c] font-normal"><div class="flex items-center pr-[2px]"><span class="grow">Category</span><svg class="w-3 h-[10px]"><use href="#funnel"/></svg></div></th>
                      <th class="bg-linear-to-b from-[#6495ed] to-[#4169e1] border border-l-[#a8c0f4] border-t-[#10307c] border-r-[#10307c] border-b-[#10307c] font-normal"><div class="flex items-center pr-[2px]"><span class="grow">Tool Style</span><svg class="w-3 h-[10px]"><use href="#funnel"/></svg></div></th>
                    </tr>
                  </thead>
                  <tbody id="tools"></tbody>
                </table>
              </div>
              <div class="w-[17px] shrink-0 flex flex-col items-center">
                <span class="w-full h-[7px] bg-[#f8f8f8] border-r border-b-2 border-black"></span>
                <button class="h-[18px]" aria-label="Scroll up"><svg class="w-2 h-2" viewBox="0 0 8 8"><path d="M1 6l3-4l3 4" fill="none" stroke="#555" stroke-width="2"/></svg></button>
                <span class="w-[15px] h-2 mt-[28px] bg-[#cdcdcd]"></span>
                <button class="mt-auto h-[18px]" aria-label="Scroll down"><svg class="w-2 h-2" viewBox="0 0 8 8"><path d="M1 2l3 4l3-4" fill="none" stroke="#555" stroke-width="2"/></svg></button>
              </div>
            </div>
          </div>
        </fieldset>
      </div>

      <footer class="h-[23px] shrink-0 border-t border-[#d8d8d8] flex items-center pl-[4px] pr-[2px]">
        <span>Tool Filter:</span>
        <button class="ml-[6px] flex items-center gap-[4px]">By Tool Groups<svg class="w-[5px] h-[3px]" viewBox="0 0 5 3"><path d="M0 0h5l-2.500 3z"/></svg></button>
        <button class="ml-[6px] flex items-center gap-[4px]"><svg class="w-[14px] h-4" viewBox="0 0 14 16"><path d="M0 0h14v16h-14z" fill="#943c36"/><path d="M11 3.500h-7v9h7M4 8h6" fill="none" stroke="#fff" stroke-width="2"/></svg>Add Selected Tools To ESPRIT</button>
        <svg class="ml-auto self-end mb-[2px] w-[11px] h-[11px]" viewBox="0 0 11 11"><path d="M8 1h2v2h-2zM4 5h2v2h-2zM8 5h2v2h-2zM0 9h2v2h-2zM4 9h2v2h-2zM8 9h2v2h-2z" fill="#aaa"/></svg>
      </footer>
    </section>
  </main>

  <!-- geometry toolbar -->
  <div class="w-[33px] shrink-0 bg-white pl-[2px] flex items-end pb-[147px]">
    <div id="geometry" class="w-[30px] h-[369px] bg-[#f0f0f0] border-r border-b border-[#a0a0a0] flex flex-col items-center pt-[3px] pr-px">
      <span class="w-[26px] h-[3px] shrink-0 border-b border-r border-[#a0a0a0] bg-white"></span>
      <span class="w-[26px] h-[3px] shrink-0 mt-px border-b border-r border-[#a0a0a0] bg-white"></span>
    </div>
  </div>
</div>

<!-- status bars -->
<div class="h-[22px] shrink-0 border-t border-[#a0a0a0] pt-[2px] pb-[2px] flex gap-[3px]">
  <span class="grow border-l border-t border-[#a0a0a0] border-b border-b-white border-r border-r-white"></span>
  <span class="w-[64px] pl-[3px] border-l border-t border-[#a0a0a0] whitespace-nowrap">SOLIDMILL</span>
  <span class="w-[88px] pl-[3px] border-l border-t border-[#a0a0a0] text-[#a0a0a0] whitespace-nowrap">SUB-ELEMENTS</span>
  <span class="w-[35px] pl-[3px] border-l border-t border-[#a0a0a0] whitespace-nowrap">SNAP</span>
  <span class="w-[24px] pl-[3px] border-l border-t border-[#a0a0a0] text-[#a0a0a0]">INT</span>
  <span class="w-[31px] pl-[3px] border-l border-t border-[#a0a0a0]">GRID</span>
  <span class="w-[17px] pl-[3px] border-l border-t border-[#a0a0a0] text-[#a0a0a0]">HI</span>
  <span class="w-[11px] bg-black border-l border-t border-[#a0a0a0]"></span>
  <span class="w-[72px] bg-[#86c0e9] border-l border-t border-[#a0a0a0] flex items-center px-[2px]"><i class="w-full h-[2px] bg-black"></i></span>
</div>
<footer class="h-[19px] shrink-0 border-b border-[#101018] flex gap-[3px]">
  <span class="grow pl-[2px] pt-px">For Help, press F1</span>
  <span class="w-[71px] pl-[1px] border-l border-t border-[#a0a0a0]">X -7.3000</span>
  <span class="w-[71px] pl-[1px] border-l border-t border-[#a0a0a0]">Y 4.4000</span>
  <span class="w-[71px] pl-[1px] border-l border-t border-[#a0a0a0]">Z 0.0000</span>
  <span class="w-[40px] pl-[1px] border-l border-t border-[#a0a0a0]">Inch</span>
</footer>

<script>
/* toolbars: names are icons, "|" a separator, "=" a drop-down, "*" a pressed button */
const grip = '<span class="w-[3px] h-6 border-l border-white border-r border-r-[#a0a0a0]"></span><span class="w-[3px] h-6 ml-px mr-[1px] border-l border-white border-r border-r-[#a0a0a0]"></span>';
const icon = k => `<svg class="w-4 h-4 fill-none stroke-black [shape-rendering:crispEdges]"><use href="#${k}"/></svg>`;

document.querySelectorAll('[data-bar]').forEach(bar => {
  bar.innerHTML = grip + bar.dataset.bar.split(' ').map(k => {
    if (k === '|') return '<span class="w-2 flex justify-center"><i class="w-px h-[22px] bg-[#a0a0a0]"></i></span>';
    if (k[0] === '=') {
      const v = k.slice(1).replace('_', ' ');
      return `<span class="relative w-[80px] h-[22px] flex px-px">
        <select aria-label="${v}" class="appearance-none w-full h-full bg-white border border-[#808080] border-r-[#e0e0e0] border-b-[#e0e0e0] pl-[3px] leading-4"><option>${v}</option></select>
        <span class="absolute right-[3px] top-[2px] w-4 h-[18px] bg-[#f0f0f0] border border-white border-r-[#696969] border-b-[#696969] flex items-center justify-center pointer-events-none"><svg class="w-[7px] h-1" viewBox="0 0 7 4"><path d="M0 0h7l-3.500 4z"/></svg></span></span>`;
    }
    if (k.endsWith('*')) {
      k = k.slice(0, -1);
      return `<button aria-label="${k}" class="w-[23px] h-[22px] flex items-center justify-center bg-[#f8f8f8] border border-[#a0a0a0] border-r-white border-b-white">${icon(k)}</button>`;
    }
    return `<button aria-label="${k}" class="w-[23px] h-[22px] flex items-center justify-center">${icon(k)}</button>`;
  }).join('');
});

/* panel tabs */
document.getElementById('tabs').innerHTML = ['tab1', 'tab2', 'tab3', 'lathe', 'tab5', 'tab6'].map((t, i) =>
  `<button aria-label="${t}" class="w-[25px] h-[22px] flex items-center justify-center border-b-2 border-r-2 border-black rounded-b-sm ${i === 1 ? 'bg-[#f0f0f0]' : 'bg-[#f6f6f6]'}">${icon(t)}</button>`).join('');

/* geometry icons */
let geo = '';
for (let i = 1; i <= 15; i++) {
  geo += `<button aria-label="Geometry ${i}" class="w-[23px] h-[23px] shrink-0 flex items-center justify-center ${i === 12 ? 'mt-[5px]' : ''}">${icon('r' + i)}</button>`;
}
document.getElementById('geometry').innerHTML += geo;

/* tool rows */
const ids = ['13847-C3', '13850', '13850-C3', '13855', '13855-C3', '13860', '13860-C3', '13862', '13862-C3', '13865', '13865-C3', '13870', '13870-C3',
  '13875', '13875-C3', '13878', '13878-C3', '13880', '13880-C3', '13885', '13885-C3', '13890', '13890-C3', '13893', '13893-C3', '13895'];
document.getElementById('tools').innerHTML = ids.map(id => {
  const on = id === '13878';
  return `<tr class="h-[21px] ${on ? 'bg-[#000080] text-white' : 'bg-linear-to-b from-[#ffffe0] to-[#eee8aa]'}">
    <td class="bg-[#fcfcfc] border-r border-b border-[#696969]">${on ? '<svg class="w-[5px] h-[9px] ml-[3px]" viewBox="0 0 5 9"><path d="M0 0l5 4.500l-5 4.500z" fill="#0000a0"/></svg>' : ''}</td>
    <td class="border-r border-b border-[#696969]"><svg class="w-3 h-4 ml-[3px] fill-none stroke-black [shape-rendering:crispEdges]"><use href="#ballmill"/></svg></td>
    <td class="border-r border-b border-[#696969] pl-[5px]">${id}</td>
    <td class="border-r border-b border-[#696969] pl-[5px]">Milling Tool</td>
    <td class="border-r border-b border-[#696969] pl-[5px]">Ball Mill</td>
  </tr>`;
}).join('');
</script>
</body>
</html>
